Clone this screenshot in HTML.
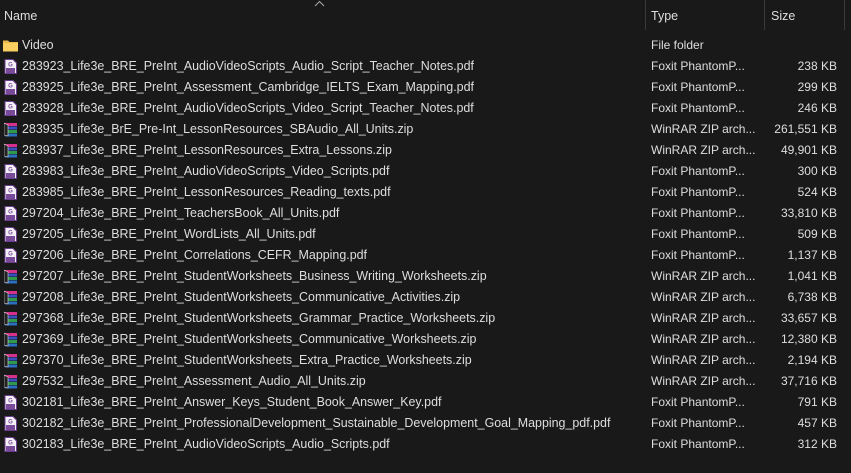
<!DOCTYPE html>
<html><head><style>
body{margin:0;width:851px;height:473px;background:#191919;overflow:hidden;font-family:"Liberation Sans",sans-serif;font-size:12.45px;color:#dedede;position:relative}
.h{position:absolute;top:9px;font-size:12.5px;color:#dedede}
.sep{position:absolute;top:0;width:1px;height:30px;background:#3a3a3a}
.r{position:absolute;left:0;width:851px;height:21px;line-height:21px;white-space:nowrap}
.n{position:absolute;left:22px;}
.t{position:absolute;left:651px;font-size:12px}
.s{position:absolute;right:14px;font-size:12px}
.ic{position:absolute;left:4px;top:3px;width:13px;height:15px}
</style></head><body>
<div class="h" style="left:4px">Name</div>
<svg style="position:absolute;left:314px;top:0" width="11" height="7"><path d="M1 6 L5.5 1.5 L10 6" stroke="#aaa" fill="none"/></svg>
<div class="sep" style="left:645px"></div>
<div class="h" style="left:651px">Type</div>
<div class="sep" style="left:764px"></div>
<div class="h" style="left:771px">Size</div>
<div class="sep" style="left:844px"></div>
<div id="rows"></div>
<script>
var pdf='<svg class="ic" viewBox="0 0 13 15"><path d="M1 .5h8l3.5 3.5v10.5h-11.5z" fill="#f4f0f8" stroke="#6b3f8f"/><path d="M2 9h9v5h-9z" fill="#7a4a9a"/><text x="6.5" y="7.5" font-size="6" text-anchor="middle" fill="#7a4a9a" font-family="Liberation Sans" font-weight="bold">G</text></svg>';
var zip='<svg class="ic" viewBox="0 0 13 15"><rect x="1" y="1" width="12" height="3" fill="#d6308a"/><rect x="1" y="4.5" width="12" height="3" fill="#3b4fc0"/><rect x="1" y="8" width="12" height="3" fill="#2f9a4a"/><rect x="1" y="11.5" width="12" height="3" fill="#2a6fc0"/><path d="M0 1l4 2v11l-4-1z" fill="#222" stroke="#ddd" stroke-width=".6"/></svg>';
var fold='<svg class="ic" viewBox="0 0 15 13" style="width:15px;height:13px;left:3px;top:4px"><path d="M0 1.5h5l1.5 1.5h8.5v9.5h-15z" fill="#e8b84a"/><path d="M0 4h15v8.5h-15z" fill="#f8cf60"/></svg>';
var d=[
["Video","File folder","",fold],
["283923_Life3e_BRE_PreInt_AudioVideoScripts_Audio_Script_Teacher_Notes.pdf","p","238 KB"],
["283925_Life3e_BRE_PreInt_Assessment_Cambridge_IELTS_Exam_Mapping.pdf","p","299 KB"],
["283928_Life3e_BRE_PreInt_AudioVideoScripts_Video_Script_Teacher_Notes.pdf","p","246 KB"],
["283935_Life3e_BrE_Pre-Int_LessonResources_SBAudio_All_Units.zip","z","261,551 KB"],
["283937_Life3e_BRE_PreInt_LessonResources_Extra_Lessons.zip","z","49,901 KB"],
["283983_Life3e_BRE_PreInt_AudioVideoScripts_Video_Scripts.pdf","p","300 KB"],
["283985_Life3e_BRE_PreInt_LessonResources_Reading_texts.pdf","p","524 KB"],
["297204_Life3e_BRE_PreInt_TeachersBook_All_Units.pdf","p","33,810 KB"],
["297205_Life3e_BRE_PreInt_WordLists_All_Units.pdf","p","509 KB"],
["297206_Life3e_BRE_PreInt_Correlations_CEFR_Mapping.pdf","p","1,137 KB"],
["297207_Life3e_BRE_PreInt_StudentWorksheets_Business_Writing_Worksheets.zip","z","1,041 KB"],
["297208_Life3e_BRE_PreInt_StudentWorksheets_Communicative_Activities.zip","z","6,738 KB"],
["297368_Life3e_BRE_PreInt_StudentWorksheets_Grammar_Practice_Worksheets.zip","z","33,657 KB"],
["297369_Life3e_BRE_PreInt_StudentWorksheets_Communicative_Worksheets.zip","z","12,380 KB"],
["297370_Life3e_BRE_PreInt_StudentWorksheets_Extra_Practice_Worksheets.zip","z","2,194 KB"],
["297532_Life3e_BRE_PreInt_Assessment_Audio_All_Units.zip","z","37,716 KB"],
["302181_Life3e_BRE_PreInt_Answer_Keys_Student_Book_Answer_Key.pdf","p","791 KB"],
["302182_Life3e_BRE_PreInt_ProfessionalDevelopment_Sustainable_Development_Goal_Mapping_pdf.pdf","p","457 KB"],
["302183_Life3e_BRE_PreInt_AudioVideoScripts_Audio_Scripts.pdf","p","312 KB"]];
var h='';
d.forEach(function(r,i){
var t=r[1]=="p"?"Foxit PhantomP...":r[1]=="z"?"WinRAR ZIP arch...":r[1];
var ic=r[3]||(r[1]=="p"?pdf:zip);
h+='<div class="r" style="top:'+(35+i*21)+'px">'+ic+'<span class="n">'+r[0]+'</span><span class="t">'+t+'</span><span class="s">'+r[2]+'</span></div>';
});
document.getElementById('rows').innerHTML=h;
</script>
</body></html>
